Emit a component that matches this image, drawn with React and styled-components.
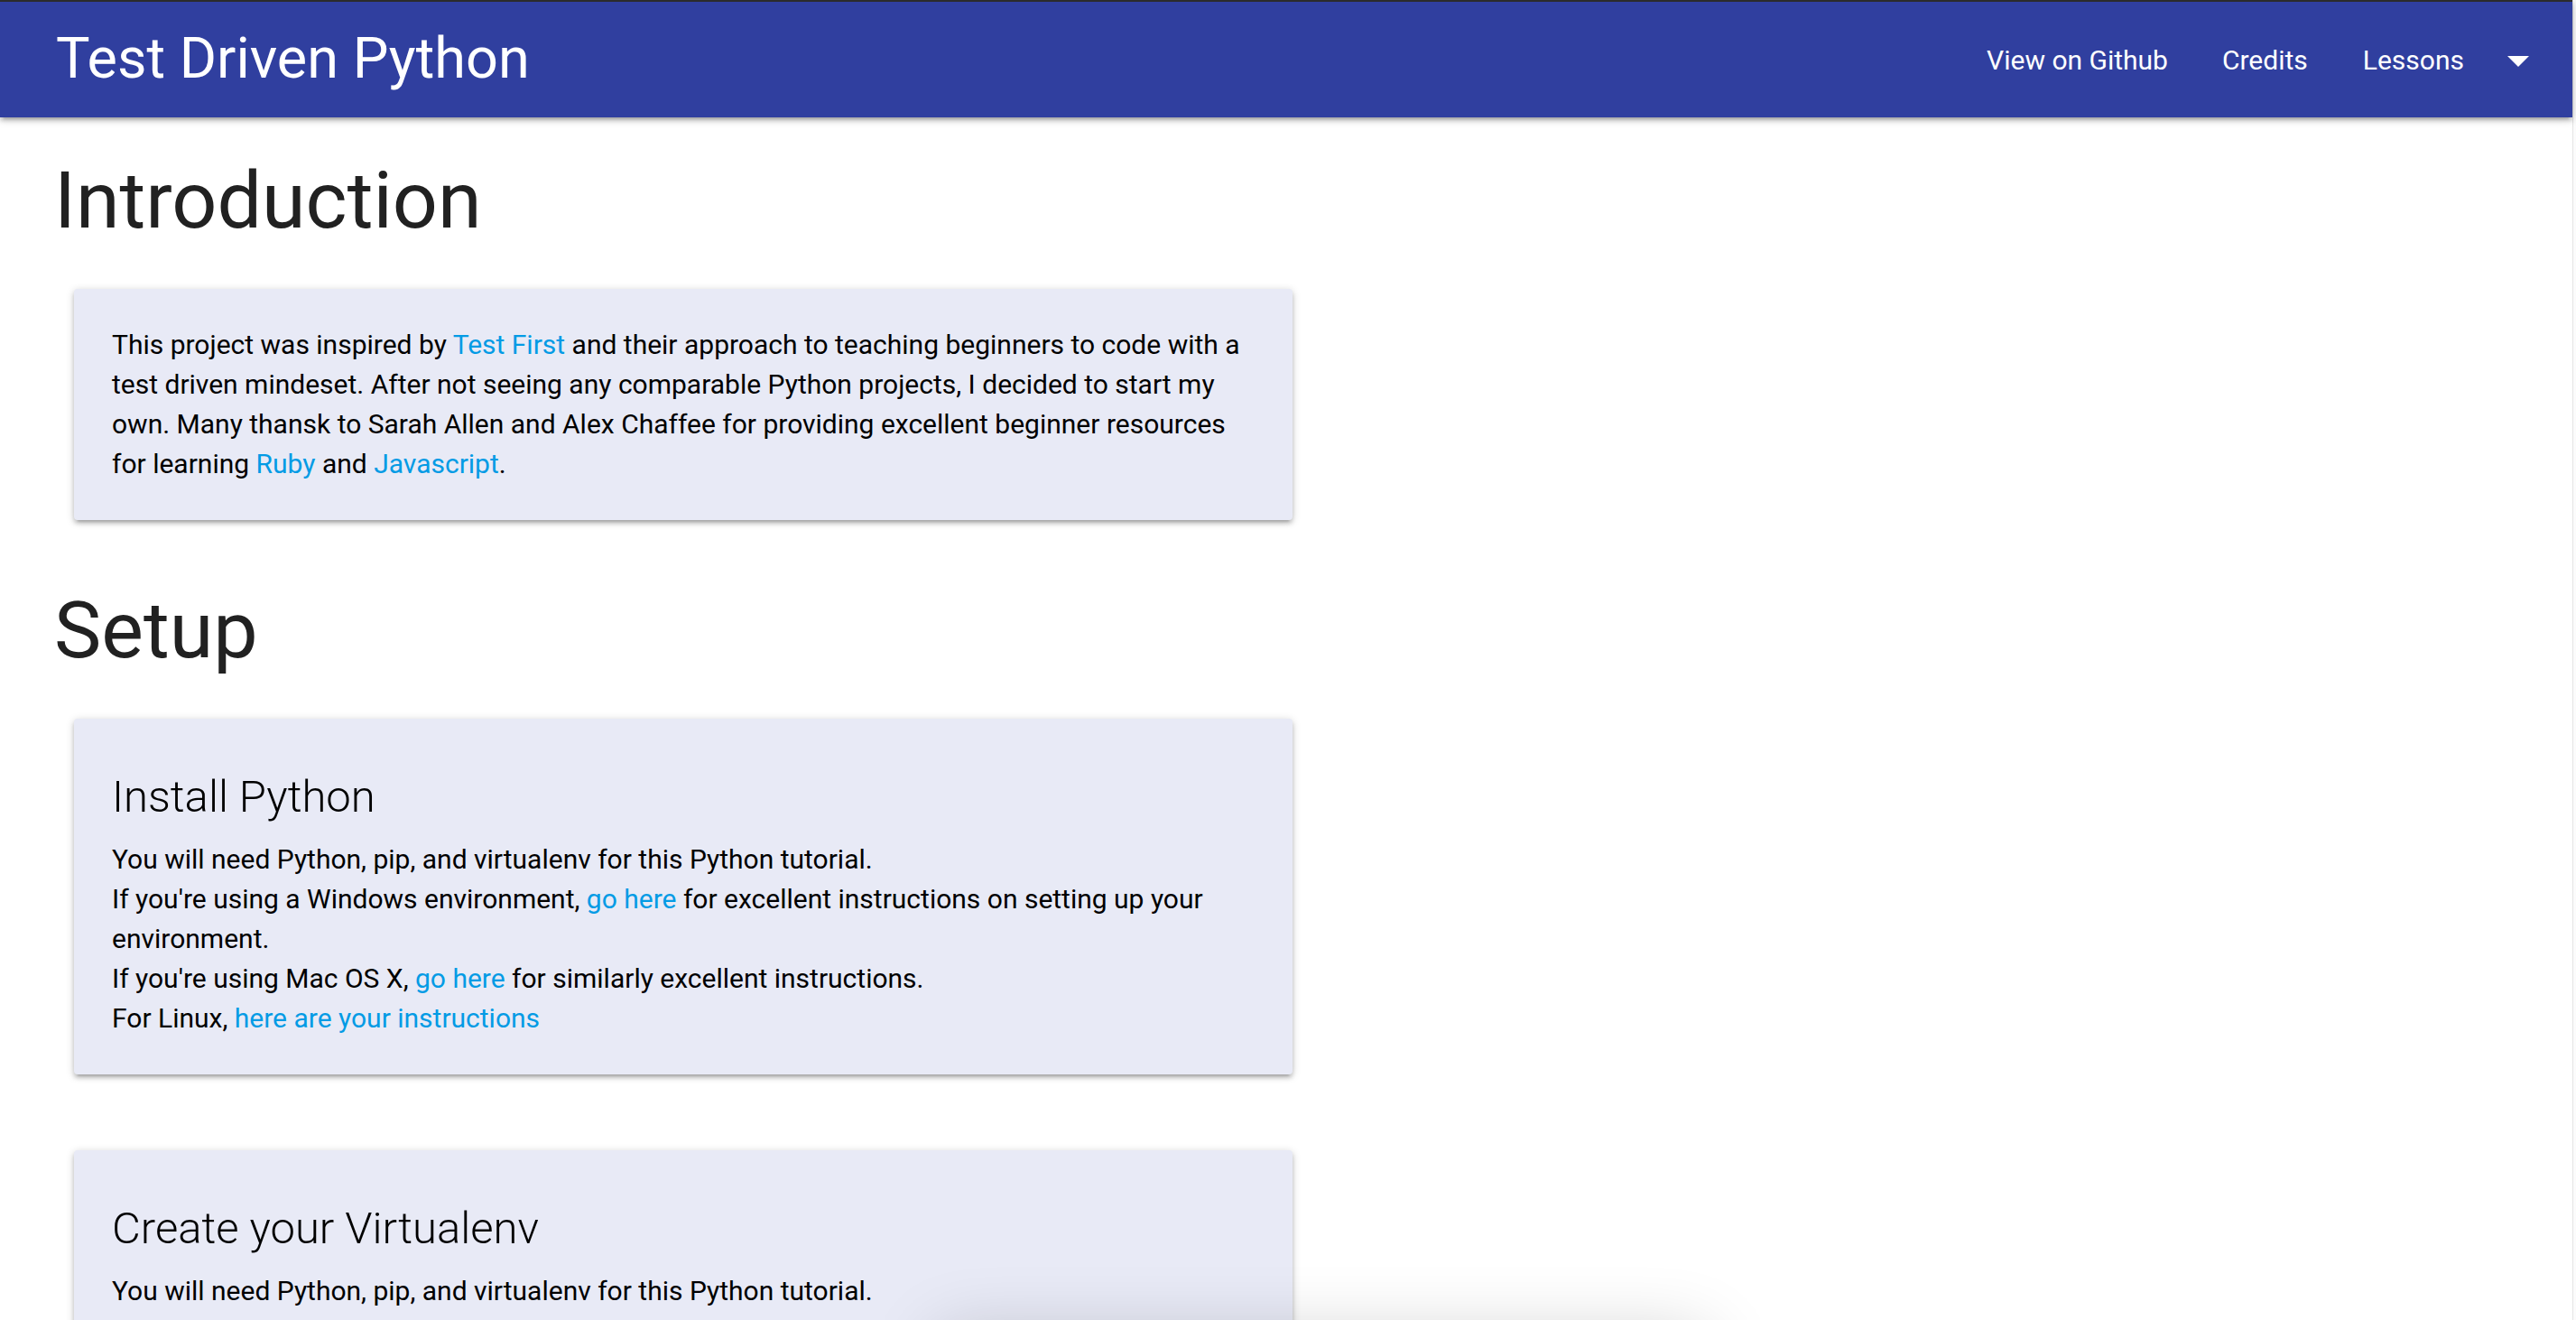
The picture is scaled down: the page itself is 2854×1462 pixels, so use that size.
import React from "react";
import styled, { createGlobalStyle } from "styled-components";

const GlobalStyle = createGlobalStyle`
  html, body {
    margin: 0;
    padding: 0;
    background: #fff;
    overflow: hidden;
  }
  body {
    font-family: Roboto, "Liberation Sans", sans-serif;
    -webkit-font-smoothing: antialiased;
  }
`;

export default function App() {
  return (
    <>
      <GlobalStyle />
      <Shell>
        <Page>
          <TopBar>
            <Brand href="#">Test Driven Python</Brand>
            <NavLinks>
              <NavItem>
                <NavLink href="#">View on Github</NavLink>
              </NavItem>
              <NavItem>
                <NavLink href="#">Credits</NavLink>
              </NavItem>
              <NavItem>
                <NavLink href="#" last>
                  Lessons
                  <Caret viewBox="0 0 24 12" aria-hidden="true">
                    <polygon points="0,0 24,0 12,12" fill="#fff" />
                  </Caret>
                </NavLink>
              </NavItem>
            </NavLinks>
          </TopBar>

          <Main>
            <Section>
              <SectionTitle>Introduction</SectionTitle>
              <CardList>
                <Card>
                  <Text>
                    This project was inspired by <A href="#">Test First</A> and
                    their approach to teaching beginners to code with a test
                    driven mindeset. After not seeing any comparable Python
                    projects, I decided to start my own. Many thansk to Sarah
                    Allen and Alex Chaffee for providing excellent beginner
                    resources for learning <A href="#">Ruby</A> and{" "}
                    <A href="#">Javascript</A>.
                  </Text>
                </Card>
              </CardList>
            </Section>

            <Section>
              <SectionTitle>Setup</SectionTitle>
              <CardList>
                <Card>
                  <CardTitle>Install Python</CardTitle>
                  <Text>
                    You will need Python, pip, and virtualenv for this Python
                    tutorial.
                    <br />
                    If you're using a Windows environment, <A href="#">go here</A>{" "}
                    for excellent instructions on setting up your environment.
                    <br />
                    If you're using Mac OS X, <A href="#">go here</A> for
                    similarly excellent instructions.
                    <br />
                    For Linux, <A href="#">here are your instructions</A>
                  </Text>
                </Card>
                <Card>
                  <CardTitle>Create your Virtualenv</CardTitle>
                  <Text>
                    You will need Python, pip, and virtualenv for this Python
                    tutorial.
                  </Text>
                </Card>
              </CardList>
            </Section>
          </Main>
        </Page>
        <ScrollTrack />
      </Shell>
      <Toast />
    </>
  );
}

const Shell = styled.div`
  display: flex;
  height: 100vh;
  overflow: hidden;
`;

const Page = styled.div`
  flex: 1;
  min-width: 0;
`;

const ScrollTrack = styled.div`
  width: 3px;
  border-left: 1px solid #e4e4e4;
  background: #fbfbfb;
`;

const TopBar = styled.nav`
  position: relative;
  z-index: 2;
  display: flex;
  align-items: center;
  justify-content: space-between;
  height: 128px;
  padding-left: 62px;
  background: #303f9f;
  border-top: 2px solid #2b2b2b;
  box-shadow: 0 4px 4px 0 rgba(0, 0, 0, 0.14), 0 6px 2px -4px rgba(0, 0, 0, 0.12),
    0 2px 10px 0 rgba(0, 0, 0, 0.2);
`;

const Brand = styled.a`
  color: #fff;
  font-size: 63px;
  line-height: 1;
  padding-bottom: 4px;
  text-decoration: none;
`;

const NavLinks = styled.ul`
  display: flex;
  align-items: center;
  height: 100%;
  margin: 0;
  padding: 0;
  list-style: none;
`;

const NavItem = styled.li`
  height: 100%;
`;

const NavLink = styled.a`
  display: flex;
  align-items: center;
  height: 100%;
  padding: ${(p) => (p.last ? "0 48px 0 31px" : "0 30px")};
  color: #fff;
  font-size: 30px;
  text-decoration: none;
`;

const Caret = styled.svg`
  width: 24px;
  height: 12px;
  margin-left: 48px;
  margin-top: 4px;
`;

const Main = styled.main`
  display: flex;
  flex-direction: column;
  padding: 0 60px;
`;

const Section = styled.section`
  display: flex;
  flex-direction: column;
  margin-bottom: 30px;
`;

const SectionTitle = styled.h2`
  margin: 43px 0 50px;
  color: #212121;
  font-size: 88px;
  font-weight: 400;
  line-height: 97px;
`;

const CardList = styled.div`
  display: flex;
  flex-direction: column;
  gap: 84px;
`;

const Card = styled.div`
  width: 1350px;
  margin-left: 22px;
  padding: 40px 42px;
  box-sizing: border-box;
  background: #e8eaf6;
  border-radius: 4px;
  box-shadow: 0 4px 4px 0 rgba(0, 0, 0, 0.14), 0 6px 2px -4px rgba(0, 0, 0, 0.12),
    0 2px 10px 0 rgba(0, 0, 0, 0.2);
`;

const CardTitle = styled.h3`
  margin: 20px 0;
  color: #000;
  font-size: 49px;
  font-weight: 300;
  line-height: 54px;
`;

const Text = styled.p`
  margin: 0;
  color: #000;
  font-size: 30px;
  line-height: 44px;
`;

const A = styled.a`
  color: #039be5;
  text-decoration: none;
`;

const Toast = styled.div`
  position: fixed;
  top: calc(100vh + 18px);
  left: 1040px;
  width: 850px;
  height: 100px;
  background: #fff;
  box-shadow: 0 0 80px rgba(0, 0, 0, 0.2);
`;
